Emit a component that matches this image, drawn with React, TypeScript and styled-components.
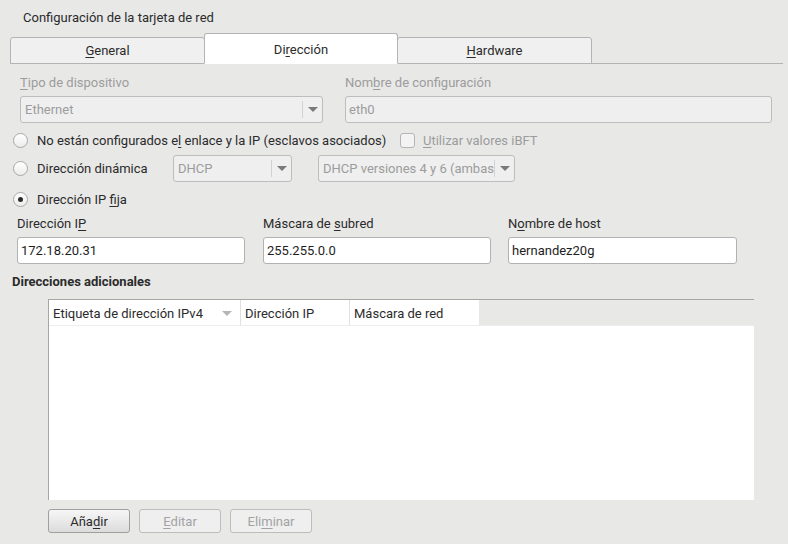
import React from "react";
import styled, { createGlobalStyle } from "styled-components";

const Global = createGlobalStyle`
  html, body { margin: 0; padding: 0; background: #e8e8e7; }
  body { font-family: Roboto, "Noto Sans", "Liberation Sans", sans-serif; font-size: 13px; color: #2b2b2b; }
  * { box-sizing: border-box; }
`;

const Page = styled.div`
  width: 788px;
  height: 544px;
  background: #e8e8e7;
  overflow: hidden;
  position: relative;
`;

const Title = styled.div`
  height: 33px;
  padding: 10px 0 0 23px;
  line-height: 16px;
`;

const TabBar = styled.div`
  display: flex;
  align-items: flex-end;
  height: 31px;
  margin: 0 5px 0 10px;
  border-bottom: 1px solid #b4b4b4;
`;

const Tab = styled.div<{ $active?: boolean; $w: number }>`
  height: ${(p) => (p.$active ? 31 : 27)}px;
  width: ${(p) => p.$w}px;
  margin-bottom: -1px;
  display: flex;
  align-items: center;
  justify-content: center;
  padding-top: ${(p) => (p.$active ? 2 : 0)}px;
  background: ${(p) => (p.$active ? "#ffffff" : "#f0f0f0")};
  border: 1px solid #b4b4b4;
  border-bottom: ${(p) => (p.$active ? "1px solid #ffffff" : "1px solid #b4b4b4")};
  border-radius: 3px 3px 0 0;
  margin-left: ${(p) => (p.$active ? -1 : 0)}px;
  margin-right: ${(p) => (p.$active ? -1 : 0)}px;
  position: relative;
  z-index: ${(p) => (p.$active ? 1 : 0)};
`;

const Mn = styled.span`
  text-decoration: underline;
  text-underline-offset: 2px;
`;

const Row = styled.div<{ $mt?: number; $h?: number; $top?: boolean }>`
  display: flex;
  align-items: ${(p) => (p.$top ? "flex-start" : "center")};
  margin-top: ${(p) => p.$mt ?? 0}px;
  height: ${(p) => p.$h ?? 26}px;
`;

const Field = styled.div<{ $w: number; $ml?: number }>`
  display: flex;
  flex-direction: column;
  width: ${(p) => p.$w}px;
  margin-left: ${(p) => p.$ml ?? 0}px;
`;

const Label = styled.div<{ $disabled?: boolean }>`
  height: 17px;
  padding-top: 1px;
  line-height: 16px;
  margin-bottom: 5px;
  color: ${(p) => (p.$disabled ? "#9c9c9c" : "#2b2b2b")};
  white-space: nowrap;
`;

const Input = styled.div<{ $disabled?: boolean }>`
  height: 27px;
  border: 1px solid ${(p) => (p.$disabled ? "#bdbdbd" : "#b2b2b2")};
  border-radius: 3px;
  background: ${(p) => (p.$disabled ? "#efefef" : "#ffffff")};
  color: ${(p) => (p.$disabled ? "#9c9c9c" : "#1e1e1e")};
  padding: 0 3px;
  display: flex;
  align-items: center;
  white-space: nowrap;
  overflow: hidden;
`;

const Combo = styled.div<{ $w: number; $ml?: number }>`
  height: 27px;
  width: ${(p) => p.$w}px;
  margin-left: ${(p) => p.$ml ?? 0}px;
  border: 1px solid #bdbdbd;
  border-radius: 3px;
  background: #efefef;
  color: #9c9c9c;
  display: flex;
  align-items: center;
  padding-left: 4px;
  overflow: hidden;
  white-space: nowrap;
`;

const ComboText = styled.span`
  flex: 1;
  overflow: hidden;
`;

const ComboSep = styled.span`
  width: 1px;
  height: 17px;
  background: #d2d2d2;
`;

const Arrow = styled.span`
  width: 19px;
  display: flex;
  justify-content: center;
  &::after {
    content: "";
    border-left: 5px solid transparent;
    border-right: 5px solid transparent;
    border-top: 5px solid #7a7a7a;
  }
`;

const Radio = styled.span<{ $checked?: boolean }>`
  width: 15px;
  height: 15px;
  border-radius: 50%;
  border: 1px solid #a9a9a9;
  background: linear-gradient(#ffffff, #ececec);
  display: inline-flex;
  align-items: center;
  justify-content: center;
  margin-right: 9px;
  flex: none;
  &::after {
    content: "";
    width: 5px;
    height: 5px;
    border-radius: 50%;
    background: ${(p) => (p.$checked ? "#2b2b2b" : "transparent")};
  }
`;

const Check = styled.span`
  width: 15px;
  height: 15px;
  border: 1px solid #b5b5b5;
  border-radius: 3px;
  background: #f3f3f3;
  margin-right: 8px;
  flex: none;
`;

const Option = styled.span<{ $w?: number; $disabled?: boolean }>`
  display: inline-flex;
  align-items: center;
  width: ${(p) => (p.$w ? `${p.$w}px` : "auto")};
  color: ${(p) => (p.$disabled ? "#9c9c9c" : "#2b2b2b")};
  white-space: nowrap;
`;

const Body = styled.div`
  padding-left: 13px;
`;

const Section = styled.div`
  font-weight: bold;
  margin: 10px 0 0 12px;
  height: 16px;
  line-height: 16px;
`;

const Table = styled.div`
  margin: 9px 0 0 48px;
  width: 706px;
  height: 201px;
  border-top: 1px solid #a6a6a6;
  border-left: 1px solid #a6a6a6;
  background: #ffffff;
`;

const HeadRow = styled.div`
  display: flex;
  height: 26px;
  background: #e8e8e7;
  border-bottom: 1px solid #ededed;
`;

const HeadCell = styled.div<{ $w: number }>`
  width: ${(p) => p.$w}px;
  background: #ffffff;
  border-right: 1px solid #e0e0e0;
  display: flex;
  align-items: center;
  padding: 1px 0 0 4px;
  white-space: nowrap;
  &:last-child { border-right: none; }
`;

const SortArrow = styled.span`
  margin-left: auto;
  margin-right: 8px;
  border-left: 5px solid transparent;
  border-right: 5px solid transparent;
  border-top: 5px solid #b5b5b5;
`;

const Buttons = styled.div`
  display: flex;
  gap: 9px;
  margin: 9px 0 0 48px;
`;

const Button = styled.div<{ $disabled?: boolean }>`
  width: 82px;
  height: 24px;
  border-radius: 3px;
  border: 1px solid ${(p) => (p.$disabled ? "#bdbdbd" : "#9f9f9f")};
  background: ${(p) => (p.$disabled ? "#efefef" : "linear-gradient(#f6f6f6, #dcdcdc)")};
  color: ${(p) => (p.$disabled ? "#a3a3a3" : "#2b2b2b")};
  display: flex;
  align-items: center;
  justify-content: center;
`;

export default function App() {
  return (
    <Page>
      <Global />
      <Title>Configuración de la tarjeta de red</Title>
      <TabBar>
        <Tab $w={195}>
          <span><Mn>G</Mn>eneral</span>
        </Tab>
        <Tab $w={194} $active>
          <span>Di<Mn>r</Mn>ección</span>
        </Tab>
        <Tab $w={195}>
          <span><Mn>H</Mn>ardware</span>
        </Tab>
      </TabBar>

      <Body>
        <Row $mt={10} $h={49} $top>
          <Field $w={303} $ml={7}>
            <Label $disabled><Mn>T</Mn>ipo de dispositivo</Label>
            <Combo $w={303}>
              <ComboText>Ethernet</ComboText>
              <ComboSep />
              <Arrow />
            </Combo>
          </Field>
          <Field $w={427} $ml={22}>
            <Label $disabled>Nom<Mn>b</Mn>re de configuración</Label>
            <Input $disabled>eth0</Input>
          </Field>
        </Row>

        <Row $mt={4} $h={26}>
          <Option $w={387}>
            <Radio />
            <span>No están configurados e<Mn>l</Mn> enlace y la IP (esclavos asociados)</span>
          </Option>
          <Option $disabled>
            <Check />
            <span><Mn>U</Mn>tilizar valores iBFT</span>
          </Option>
        </Row>

        <Row $mt={2} $h={27}>
          <Option $w={160}>
            <Radio />
            <span>Dirección dinámica</span>
          </Option>
          <Combo $w={119}>
            <ComboText>DHCP</ComboText>
            <ComboSep />
            <Arrow />
          </Combo>
          <Combo $w={197} $ml={26}>
            <ComboText>DHCP versiones 4 y 6 (ambas</ComboText>
            <ComboSep />
            <Arrow />
          </Combo>
        </Row>

        <Row $mt={4} $h={26}>
          <Option>
            <Radio $checked />
            <span>Dirección IP <Mn>f</Mn>ija</span>
          </Option>
        </Row>

        <Row $mt={3} $h={49} $top>
          <Field $w={228} $ml={4}>
            <Label>Dirección I<Mn>P</Mn></Label>
            <Input>172.18.20.31</Input>
          </Field>
          <Field $w={228} $ml={18}>
            <Label>Máscara de <Mn>s</Mn>ubred</Label>
            <Input>255.255.0.0</Input>
          </Field>
          <Field $w={229} $ml={17}>
            <Label>N<Mn>o</Mn>mbre de host</Label>
            <Input>hernandez20g</Input>
          </Field>
        </Row>
      </Body>

      <Section>Direcciones adicionales</Section>
      <Table>
        <HeadRow>
          <HeadCell $w={192}>
            Etiqueta de dirección IPv4
            <SortArrow />
          </HeadCell>
          <HeadCell $w={109}>Dirección IP</HeadCell>
          <HeadCell $w={129}>Máscara de red</HeadCell>
        </HeadRow>
      </Table>

      <Buttons>
        <Button>Aña<Mn>d</Mn>ir</Button>
        <Button $disabled><Mn>E</Mn>ditar</Button>
        <Button $disabled>Eli<Mn>m</Mn>inar</Button>
      </Buttons>
    </Page>
  );
}
